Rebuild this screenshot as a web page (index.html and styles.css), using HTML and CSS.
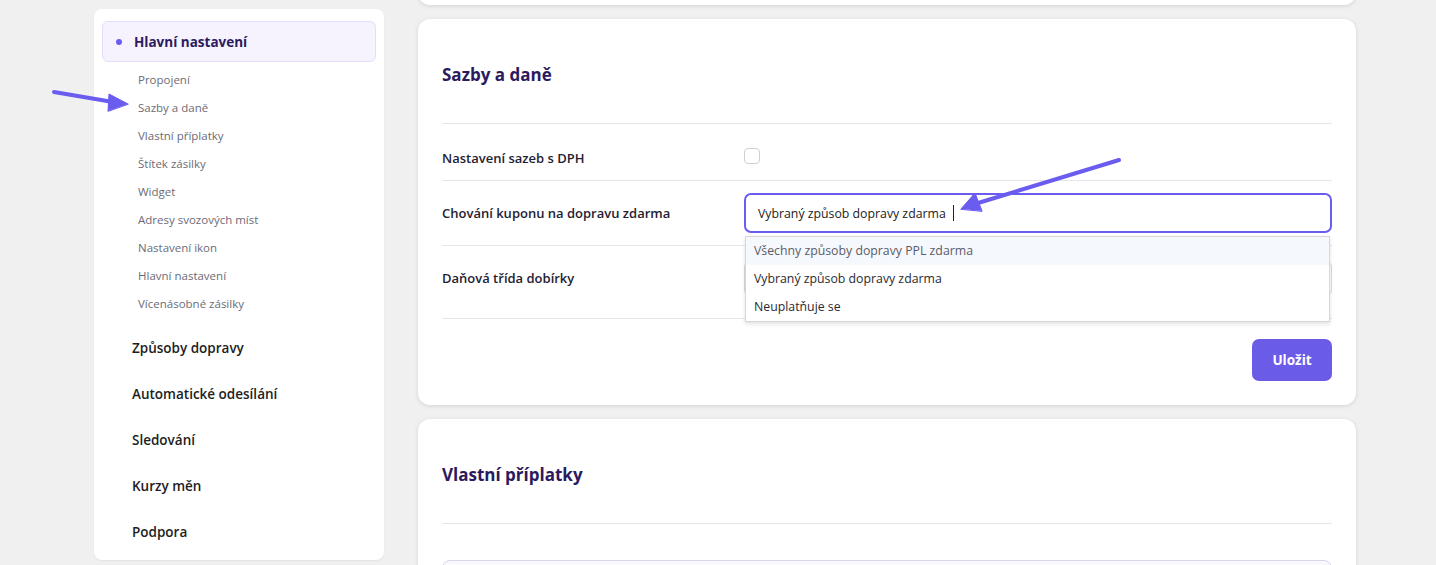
FILE: index.html
```html
<!DOCTYPE html>
<html lang="cs">
<head>
<meta charset="utf-8">
<title>Nastavení</title>
<link rel="stylesheet" href="styles.css">
</head>
<body>
<div class="page">
  <aside class="sidebar">
    <div class="nav-active"><span class="dot"></span>Hlavní nastavení</div>
    <ul class="subnav">
      <li>Propojení</li>
      <li>Sazby a daně</li>
      <li>Vlastní příplatky</li>
      <li>Štítek zásilky</li>
      <li>Widget</li>
      <li>Adresy svozových míst</li>
      <li>Nastavení ikon</li>
      <li>Hlavní nastavení</li>
      <li>Vícenásobné zásilky</li>
    </ul>
    <ul class="mainnav">
      <li>Způsoby dopravy</li>
      <li>Automatické odesílání</li>
      <li>Sledování</li>
      <li>Kurzy měn</li>
      <li>Podpora</li>
    </ul>
  </aside>
  <main class="content">
    <section class="card card-stub"></section>
    <section class="card">
      <div class="card-head"><h2>Sazby a daně</h2></div>
      <div class="row row-check">
        <div class="label">Nastavení sazeb s DPH</div>
        <div class="field"><span class="checkbox"></span></div>
      </div>
      <div class="row row-input">
        <div class="label">Chování kuponu na dopravu zdarma</div>
        <div class="field combo">
          <div class="input">Vybraný způsob dopravy zdarma <span class="caret"></span></div>
          <ul class="dropdown">
            <li class="hl">Všechny způsoby dopravy PPL zdarma</li>
            <li>Vybraný způsob dopravy zdarma</li>
            <li>Neuplatňuje se</li>
          </ul>
        </div>
      </div>
      <div class="row row-select">
        <div class="label">Daňová třída dobírky</div>
        <div class="field"><div class="select"></div></div>
      </div>
      <div class="actions"><button class="btn">Uložit</button></div>
    </section>
    <section class="card card-last">
      <div class="card-head"><h2>Vlastní příplatky</h2></div>
      <div class="subbox"></div>
    </section>
  </main>
</div>
<svg class="arrows" width="1436" height="565" viewBox="0 0 1436 565">
  <g fill="#6b5cf0" stroke="#6b5cf0" stroke-linecap="round">
    <line x1="54" y1="92" x2="113" y2="102" stroke-width="4"/>
    <polygon points="128,104 109,94 108,111" stroke-width="1" stroke-linejoin="round"/>
    <line x1="1119" y1="160" x2="978" y2="203" stroke-width="4"/>
    <polygon points="961,209 975,193 982,211" stroke-width="1" stroke-linejoin="round"/>
  </g>
</svg>
</body>
</html>
```

FILE: styles.css
```css
* { box-sizing: border-box; }
html, body { margin: 0; padding: 0; }
body {
  background: #f0f0f0;
  font-family: "Open Sans", "Noto Sans", sans-serif;
  color: #1f2330;
  width: 1436px;
  height: 565px;
  overflow: hidden;
  position: relative;
}
ul { list-style: none; margin: 0; padding: 0; }

.page {
  display: flex;
  align-items: flex-start;
  gap: 34px;
  padding-left: 94px;
  height: 565px;
  overflow: hidden;
}

.sidebar {
  width: 290px;
  margin-top: 9px;
  background: #fff;
  border-radius: 8px;
  padding: 12px 8px 5px 8px;
  box-shadow: 0 1px 2px rgba(0,0,0,0.06);
}
.nav-active {
  height: 41px;
  display: flex;
  align-items: center;
  padding-left: 13px;
  background: #f6f3fe;
  border: 1px solid #e5dcfb;
  border-radius: 6px;
  color: #2b1a5e;
  font-weight: 700;
  font-size: 13.5px;
}
.dot {
  width: 6px;
  height: 6px;
  border-radius: 50%;
  background: #6b5cf0;
  margin-right: 12px;
}
.subnav { margin-top: 4px; }
.subnav li {
  height: 28px;
  line-height: 28px;
  padding-left: 36px;
  font-size: 11.5px;
  color: #6b6b78;
}
.mainnav { margin-top: 7px; }
.mainnav li {
  height: 46px;
  line-height: 46px;
  padding-left: 30px;
  font-size: 13.5px;
  font-weight: 600;
  color: #1d1d22;
}

.content {
  width: 938px;
  margin-top: -20px;
  display: flex;
  flex-direction: column;
  gap: 14px;
}
.card {
  background: #fff;
  border-radius: 12px;
  padding: 0 24px 24px 24px;
  box-shadow: 0 1px 4px rgba(0,0,0,0.12);
}
.card-stub { height: 25px; padding: 0; }
.card-last { padding-bottom: 0; }
.card-head {
  height: 105px;
  padding-top: 44px;
  border-bottom: 1px solid #e6e6ea;
}
.card-head h2 {
  margin: 0;
  font-size: 17px;
  line-height: 24px;
  font-weight: 700;
  color: #2b1a5e;
}

.row {
  display: flex;
  border-bottom: 1px solid #e6e6ea;
}
.label {
  width: 302px;
  flex: none;
  font-size: 13px;
  font-weight: 600;
  color: #1f2233;
  line-height: 20px;
}
.field { flex: 1; }
.row-check { height: 57px; padding-top: 24px; }
.checkbox {
  display: block;
  width: 16px;
  height: 16px;
  border: 1px solid #cfcfd8;
  border-radius: 4px;
  background: #fff;
}
.row-input { height: 65px; padding-top: 12px; align-items: center; padding-bottom: 12px; }
.combo { position: relative; height: 40px; }
.input {
  height: 40px;
  border: 2px solid #6b5cf0;
  border-radius: 7px;
  padding-left: 12px;
  display: flex;
  align-items: center;
  font-size: 12.3px;
  color: #222;
  white-space: pre;
}
.caret {
  display: inline-block;
  width: 1px;
  height: 16px;
  background: #222;
  margin-left: 4px;
}
.dropdown {
  position: absolute;
  left: 1px;
  top: 43px;
  width: 585px;
  background: #fff;
  border: 1px solid #d6d6dc;
  box-shadow: 0 2px 4px rgba(0,0,0,0.12);
  z-index: 5;
}
.dropdown li {
  height: 28px;
  line-height: 28px;
  padding-left: 8px;
  font-size: 12.3px;
  color: #2a2a30;
}
.dropdown li.hl { background: #f5f8fc; color: #5c5c68; }
.row-select { height: 73px; padding-top: 15px; }
.row-select .label { line-height: 35px; }
.select {
  height: 35px;
  border: 1px solid #d8d8de;
  border-radius: 6px;
}
.actions {
  display: flex;
  justify-content: flex-end;
  padding-top: 20px;
}
.btn {
  width: 80px;
  height: 42px;
  border: none;
  border-radius: 7px;
  background: #6b5ce8;
  color: #fff;
  font-family: inherit;
  font-weight: 700;
  font-size: 13.5px;
}
.subbox {
  margin-top: 36px;
  height: 40px;
  border: 1px solid #d9d6ec;
  border-radius: 8px;
  background: #f8f8fd;
}

.arrows {
  position: absolute;
  left: 0;
  top: 0;
  pointer-events: none;
  z-index: 10;
}
```
